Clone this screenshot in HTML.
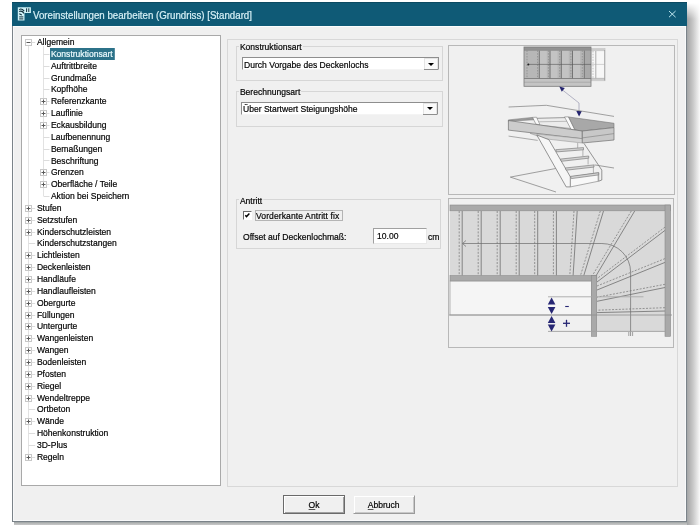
<!DOCTYPE html>
<html><head><meta charset="utf-8">
<style>
*{margin:0;padding:0;box-sizing:border-box}
html,body{width:700px;height:525px;overflow:hidden;background:#fff;font-family:"Liberation Sans",sans-serif;position:relative}
.abs{position:absolute}
#shadowR{left:687px;top:3px;width:13px;height:522px;-webkit-mask-image:linear-gradient(to bottom,transparent 0,#000 16px);background:linear-gradient(to right,#a2a5a7 0,#b0b0b0 2px,#c8c8c8 6px,#e4e4e4 10px,#fafafa 13px)}
#shadowB{left:14px;top:522px;width:673px;height:3px;background:linear-gradient(to bottom,#9ca2a2 0,#b8baba 1.5px,#c8c8c8 3px)}
#win{left:12px;top:2px;width:675px;height:520px;background:#f0f0f0;border:1px solid #7b8389;border-top:none;box-shadow:inset 1px 0 0 #f8f9fa,inset -1px -1px 0 #f8f9fa}
#title{left:12px;top:2px;width:675px;height:24px;background:#0f5a76;border-top:1px solid #0b4a62}
#ttext{left:33px;top:8.5px;font-size:10.5px;transform:scaleX(0.924);transform-origin:0 50%;color:#d8f1f7;white-space:nowrap;line-height:12px;-webkit-text-stroke:0.2px #d8f1f7}
#tree{left:21px;top:35px;width:200px;height:451px;background:#fff;border:1px solid #a9a9a9}
.row{position:absolute;font-size:9.5px;letter-spacing:0;transform:scaleX(0.9);transform-origin:0 50%;color:#000;white-space:nowrap;line-height:12px;padding:0 1.5px 0 1px;-webkit-text-stroke:0.2px #000}
.sel{background:#2c7289;color:#eefcff;-webkit-text-stroke:0.2px #eefcff;padding-right:2.4px}
#outer{left:227px;top:39px;width:451px;height:448px;border:1px solid #d8d8d8}
.grp{position:absolute;border:1px solid #d6d6d6}
.glabel{position:absolute;font-size:9.5px;letter-spacing:0;transform:scaleX(0.9);transform-origin:0 50%;color:#000;background:#f0f0f0;padding:0 1px;white-space:nowrap;line-height:12px;-webkit-text-stroke:0.2px #000}
.combo{position:absolute;background:#fff;border:1px solid #8e8e8e;border-bottom-color:#f4f4f4;height:12px}
.ctext{position:absolute;left:2px;top:0px;font-size:9.5px;letter-spacing:0;transform:scaleX(0.9);transform-origin:0 50%;line-height:11px;color:#000;white-space:nowrap;-webkit-text-stroke:0.2px #000}
.btn{position:absolute;top:494.5px;padding-top:0px;width:62px;height:19px;background:#f0f0f0;border:1px solid #f0f0f0;border-right-color:#9a9a9a;border-bottom-color:#9a9a9a;box-shadow:inset 1px 1px 0 #fff, inset -1px -1px 0 #c8c8c8;font-size:9.5px;color:#000;text-align:center;line-height:17px;-webkit-text-stroke:0.2px #000}
.dd{position:absolute;right:0;top:0;width:14px;height:12px;background:#fafafa;box-shadow:inset 1px 1px 0 #e4e4e4,inset -1px 0 0 #e4e4e4;border-bottom:1px solid #8e8e8e}
.dd:after{content:"";position:absolute;left:3.5px;top:4.5px;border-left:3px solid transparent;border-right:3px solid transparent;border-top:3.6px solid #000}
.chk{position:absolute;width:8.5px;height:8.5px;border:1px solid #6a6a6a;border-right-color:#fff;border-bottom-color:#fff;background:#fff}
.focus{position:absolute;border:1px solid #b4b4b4}
.txt{position:absolute;font-size:9.5px;letter-spacing:0;transform:scaleX(0.9);transform-origin:0 50%;color:#000;white-space:nowrap;line-height:12px;-webkit-text-stroke:0.2px #000}
.edit{position:absolute;background:#fff;border:1px solid #a0a0a0;border-bottom-color:#e8e8e8;border-right-color:#e8e8e8}
.def{border:1px solid #6a6a6a;box-shadow:inset 1px 1px 0 #fff, inset -1px -1px 0 #a0a0a0}
.bt{display:inline-block;transform:scaleX(0.9)}
u{text-decoration:underline;text-underline-offset:1px;text-decoration-thickness:0.6px;text-decoration-color:#555}
.panel{position:absolute;background:#f0f0f0;border:1px solid #b8b8b8}
#wrap{position:absolute;left:0;top:0;width:700px;height:525px;will-change:transform}
</style></head><body><div id="wrap">
<div class="abs" id="shadowR"></div>
<div class="abs" id="shadowB"></div>
<div class="abs" id="win"></div>
<div class="abs" id="title"></div>
<div class="abs" style="left:13px;top:26px;width:673px;height:1px;background:#fbfdfd"></div>
<div class="abs" id="ttext">Voreinstellungen bearbeiten (Grundriss) [Standard]</div>
<svg class="abs" style="left:0;top:0" width="700" height="30">
<polygon points="17.8,7.2 30.9,7.2 30.9,12.9 24.5,12.9 24.5,20.4 17.8,20.4" fill="#d0f2f8"/>
<path d="M19.2 9.6 Q21.5 7.8 24.2 11.2 M19.2 11.6 Q21.8 10.2 24 13.4 M19.3 13.8 L21.8 15" stroke="#14303c" stroke-width="1.1" fill="none"/>
<path d="M26.6 8.3 V12 M28.8 8.3 V12" stroke="#14303c" stroke-width="1"/>
<path d="M19.2 16.9 H23.3 M19.2 18.9 H23.3" stroke="#14303c" stroke-width="1"/>
<path d="M669 11 L675.6 17.2 M675.6 11 L669 17.2" stroke="#bfe7f0" stroke-width="1"/>
</svg>

<div class="abs" id="tree"></div>
<svg class="abs" style="left:0;top:0" width="230" height="490">
<line x1="43.5" y1="46.0" x2="43.5" y2="196.0" stroke="#e2e2e2" stroke-width="1"/>
<line x1="28.5" y1="46.0" x2="28.5" y2="456.8" stroke="#e2e2e2" stroke-width="1"/>
<rect x="25.5" y="39.5" width="6" height="6" fill="#fff" stroke="#c8c8c8" stroke-width="1"/>
<line x1="26.5" y1="42.5" x2="30.5" y2="42.5" stroke="#5a5a5a" stroke-width="1"/>
<line x1="31.5" y1="42.5" x2="35.2" y2="42.5" stroke="#dcdcdc" stroke-width="1"/>
<line x1="43.5" y1="54.5" x2="49.5" y2="54.5" stroke="#dcdcdc" stroke-width="1"/>
<line x1="43.5" y1="66.5" x2="49.5" y2="66.5" stroke="#dcdcdc" stroke-width="1"/>
<line x1="43.5" y1="78.5" x2="49.5" y2="78.5" stroke="#dcdcdc" stroke-width="1"/>
<line x1="43.5" y1="89.5" x2="49.5" y2="89.5" stroke="#dcdcdc" stroke-width="1"/>
<rect x="40.5" y="98.5" width="6" height="6" fill="#fff" stroke="#c8c8c8" stroke-width="1"/>
<line x1="41.5" y1="101.5" x2="45.5" y2="101.5" stroke="#5a5a5a" stroke-width="1"/>
<line x1="43.5" y1="99.5" x2="43.5" y2="103.5" stroke="#5a5a5a" stroke-width="1"/>
<line x1="46.5" y1="101.5" x2="49.5" y2="101.5" stroke="#dcdcdc" stroke-width="1"/>
<rect x="40.5" y="110.5" width="6" height="6" fill="#fff" stroke="#c8c8c8" stroke-width="1"/>
<line x1="41.5" y1="113.5" x2="45.5" y2="113.5" stroke="#5a5a5a" stroke-width="1"/>
<line x1="43.5" y1="111.5" x2="43.5" y2="115.5" stroke="#5a5a5a" stroke-width="1"/>
<line x1="46.5" y1="113.5" x2="49.5" y2="113.5" stroke="#dcdcdc" stroke-width="1"/>
<rect x="40.5" y="122.5" width="6" height="6" fill="#fff" stroke="#c8c8c8" stroke-width="1"/>
<line x1="41.5" y1="125.5" x2="45.5" y2="125.5" stroke="#5a5a5a" stroke-width="1"/>
<line x1="43.5" y1="123.5" x2="43.5" y2="127.5" stroke="#5a5a5a" stroke-width="1"/>
<line x1="46.5" y1="125.5" x2="49.5" y2="125.5" stroke="#dcdcdc" stroke-width="1"/>
<line x1="43.5" y1="137.5" x2="49.5" y2="137.5" stroke="#dcdcdc" stroke-width="1"/>
<line x1="43.5" y1="149.5" x2="49.5" y2="149.5" stroke="#dcdcdc" stroke-width="1"/>
<line x1="43.5" y1="160.5" x2="49.5" y2="160.5" stroke="#dcdcdc" stroke-width="1"/>
<rect x="40.5" y="169.5" width="6" height="6" fill="#fff" stroke="#c8c8c8" stroke-width="1"/>
<line x1="41.5" y1="172.5" x2="45.5" y2="172.5" stroke="#5a5a5a" stroke-width="1"/>
<line x1="43.5" y1="170.5" x2="43.5" y2="174.5" stroke="#5a5a5a" stroke-width="1"/>
<line x1="46.5" y1="172.5" x2="49.5" y2="172.5" stroke="#dcdcdc" stroke-width="1"/>
<rect x="40.5" y="181.5" width="6" height="6" fill="#fff" stroke="#c8c8c8" stroke-width="1"/>
<line x1="41.5" y1="184.5" x2="45.5" y2="184.5" stroke="#5a5a5a" stroke-width="1"/>
<line x1="43.5" y1="182.5" x2="43.5" y2="186.5" stroke="#5a5a5a" stroke-width="1"/>
<line x1="46.5" y1="184.5" x2="49.5" y2="184.5" stroke="#dcdcdc" stroke-width="1"/>
<line x1="43.5" y1="196.5" x2="49.5" y2="196.5" stroke="#dcdcdc" stroke-width="1"/>
<rect x="25.5" y="205.5" width="6" height="6" fill="#fff" stroke="#c8c8c8" stroke-width="1"/>
<line x1="26.5" y1="208.5" x2="30.5" y2="208.5" stroke="#5a5a5a" stroke-width="1"/>
<line x1="28.5" y1="206.5" x2="28.5" y2="210.5" stroke="#5a5a5a" stroke-width="1"/>
<line x1="31.5" y1="208.5" x2="35.2" y2="208.5" stroke="#dcdcdc" stroke-width="1"/>
<rect x="25.5" y="217.5" width="6" height="6" fill="#fff" stroke="#c8c8c8" stroke-width="1"/>
<line x1="26.5" y1="220.5" x2="30.5" y2="220.5" stroke="#5a5a5a" stroke-width="1"/>
<line x1="28.5" y1="218.5" x2="28.5" y2="222.5" stroke="#5a5a5a" stroke-width="1"/>
<line x1="31.5" y1="220.5" x2="35.2" y2="220.5" stroke="#dcdcdc" stroke-width="1"/>
<rect x="25.5" y="229.5" width="6" height="6" fill="#fff" stroke="#c8c8c8" stroke-width="1"/>
<line x1="26.5" y1="232.5" x2="30.5" y2="232.5" stroke="#5a5a5a" stroke-width="1"/>
<line x1="28.5" y1="230.5" x2="28.5" y2="234.5" stroke="#5a5a5a" stroke-width="1"/>
<line x1="31.5" y1="232.5" x2="35.2" y2="232.5" stroke="#dcdcdc" stroke-width="1"/>
<line x1="28.5" y1="243.5" x2="35.2" y2="243.5" stroke="#dcdcdc" stroke-width="1"/>
<rect x="25.5" y="252.5" width="6" height="6" fill="#fff" stroke="#c8c8c8" stroke-width="1"/>
<line x1="26.5" y1="255.5" x2="30.5" y2="255.5" stroke="#5a5a5a" stroke-width="1"/>
<line x1="28.5" y1="253.5" x2="28.5" y2="257.5" stroke="#5a5a5a" stroke-width="1"/>
<line x1="31.5" y1="255.5" x2="35.2" y2="255.5" stroke="#dcdcdc" stroke-width="1"/>
<rect x="25.5" y="264.5" width="6" height="6" fill="#fff" stroke="#c8c8c8" stroke-width="1"/>
<line x1="26.5" y1="267.5" x2="30.5" y2="267.5" stroke="#5a5a5a" stroke-width="1"/>
<line x1="28.5" y1="265.5" x2="28.5" y2="269.5" stroke="#5a5a5a" stroke-width="1"/>
<line x1="31.5" y1="267.5" x2="35.2" y2="267.5" stroke="#dcdcdc" stroke-width="1"/>
<rect x="25.5" y="276.5" width="6" height="6" fill="#fff" stroke="#c8c8c8" stroke-width="1"/>
<line x1="26.5" y1="279.5" x2="30.5" y2="279.5" stroke="#5a5a5a" stroke-width="1"/>
<line x1="28.5" y1="277.5" x2="28.5" y2="281.5" stroke="#5a5a5a" stroke-width="1"/>
<line x1="31.5" y1="279.5" x2="35.2" y2="279.5" stroke="#dcdcdc" stroke-width="1"/>
<rect x="25.5" y="288.5" width="6" height="6" fill="#fff" stroke="#c8c8c8" stroke-width="1"/>
<line x1="26.5" y1="291.5" x2="30.5" y2="291.5" stroke="#5a5a5a" stroke-width="1"/>
<line x1="28.5" y1="289.5" x2="28.5" y2="293.5" stroke="#5a5a5a" stroke-width="1"/>
<line x1="31.5" y1="291.5" x2="35.2" y2="291.5" stroke="#dcdcdc" stroke-width="1"/>
<rect x="25.5" y="300.5" width="6" height="6" fill="#fff" stroke="#c8c8c8" stroke-width="1"/>
<line x1="26.5" y1="303.5" x2="30.5" y2="303.5" stroke="#5a5a5a" stroke-width="1"/>
<line x1="28.5" y1="301.5" x2="28.5" y2="305.5" stroke="#5a5a5a" stroke-width="1"/>
<line x1="31.5" y1="303.5" x2="35.2" y2="303.5" stroke="#dcdcdc" stroke-width="1"/>
<rect x="25.5" y="312.5" width="6" height="6" fill="#fff" stroke="#c8c8c8" stroke-width="1"/>
<line x1="26.5" y1="315.5" x2="30.5" y2="315.5" stroke="#5a5a5a" stroke-width="1"/>
<line x1="28.5" y1="313.5" x2="28.5" y2="317.5" stroke="#5a5a5a" stroke-width="1"/>
<line x1="31.5" y1="315.5" x2="35.2" y2="315.5" stroke="#dcdcdc" stroke-width="1"/>
<rect x="25.5" y="323.5" width="6" height="6" fill="#fff" stroke="#c8c8c8" stroke-width="1"/>
<line x1="26.5" y1="326.5" x2="30.5" y2="326.5" stroke="#5a5a5a" stroke-width="1"/>
<line x1="28.5" y1="324.5" x2="28.5" y2="328.5" stroke="#5a5a5a" stroke-width="1"/>
<line x1="31.5" y1="326.5" x2="35.2" y2="326.5" stroke="#dcdcdc" stroke-width="1"/>
<rect x="25.5" y="335.5" width="6" height="6" fill="#fff" stroke="#c8c8c8" stroke-width="1"/>
<line x1="26.5" y1="338.5" x2="30.5" y2="338.5" stroke="#5a5a5a" stroke-width="1"/>
<line x1="28.5" y1="336.5" x2="28.5" y2="340.5" stroke="#5a5a5a" stroke-width="1"/>
<line x1="31.5" y1="338.5" x2="35.2" y2="338.5" stroke="#dcdcdc" stroke-width="1"/>
<rect x="25.5" y="347.5" width="6" height="6" fill="#fff" stroke="#c8c8c8" stroke-width="1"/>
<line x1="26.5" y1="350.5" x2="30.5" y2="350.5" stroke="#5a5a5a" stroke-width="1"/>
<line x1="28.5" y1="348.5" x2="28.5" y2="352.5" stroke="#5a5a5a" stroke-width="1"/>
<line x1="31.5" y1="350.5" x2="35.2" y2="350.5" stroke="#dcdcdc" stroke-width="1"/>
<rect x="25.5" y="359.5" width="6" height="6" fill="#fff" stroke="#c8c8c8" stroke-width="1"/>
<line x1="26.5" y1="362.5" x2="30.5" y2="362.5" stroke="#5a5a5a" stroke-width="1"/>
<line x1="28.5" y1="360.5" x2="28.5" y2="364.5" stroke="#5a5a5a" stroke-width="1"/>
<line x1="31.5" y1="362.5" x2="35.2" y2="362.5" stroke="#dcdcdc" stroke-width="1"/>
<rect x="25.5" y="371.5" width="6" height="6" fill="#fff" stroke="#c8c8c8" stroke-width="1"/>
<line x1="26.5" y1="374.5" x2="30.5" y2="374.5" stroke="#5a5a5a" stroke-width="1"/>
<line x1="28.5" y1="372.5" x2="28.5" y2="376.5" stroke="#5a5a5a" stroke-width="1"/>
<line x1="31.5" y1="374.5" x2="35.2" y2="374.5" stroke="#dcdcdc" stroke-width="1"/>
<rect x="25.5" y="383.5" width="6" height="6" fill="#fff" stroke="#c8c8c8" stroke-width="1"/>
<line x1="26.5" y1="386.5" x2="30.5" y2="386.5" stroke="#5a5a5a" stroke-width="1"/>
<line x1="28.5" y1="384.5" x2="28.5" y2="388.5" stroke="#5a5a5a" stroke-width="1"/>
<line x1="31.5" y1="386.5" x2="35.2" y2="386.5" stroke="#dcdcdc" stroke-width="1"/>
<rect x="25.5" y="395.5" width="6" height="6" fill="#fff" stroke="#c8c8c8" stroke-width="1"/>
<line x1="26.5" y1="398.5" x2="30.5" y2="398.5" stroke="#5a5a5a" stroke-width="1"/>
<line x1="28.5" y1="396.5" x2="28.5" y2="400.5" stroke="#5a5a5a" stroke-width="1"/>
<line x1="31.5" y1="398.5" x2="35.2" y2="398.5" stroke="#dcdcdc" stroke-width="1"/>
<line x1="28.5" y1="409.5" x2="35.2" y2="409.5" stroke="#dcdcdc" stroke-width="1"/>
<rect x="25.5" y="418.5" width="6" height="6" fill="#fff" stroke="#c8c8c8" stroke-width="1"/>
<line x1="26.5" y1="421.5" x2="30.5" y2="421.5" stroke="#5a5a5a" stroke-width="1"/>
<line x1="28.5" y1="419.5" x2="28.5" y2="423.5" stroke="#5a5a5a" stroke-width="1"/>
<line x1="31.5" y1="421.5" x2="35.2" y2="421.5" stroke="#dcdcdc" stroke-width="1"/>
<line x1="28.5" y1="433.5" x2="35.2" y2="433.5" stroke="#dcdcdc" stroke-width="1"/>
<line x1="28.5" y1="445.5" x2="35.2" y2="445.5" stroke="#dcdcdc" stroke-width="1"/>
<rect x="25.5" y="454.5" width="6" height="6" fill="#fff" stroke="#c8c8c8" stroke-width="1"/>
<line x1="26.5" y1="457.5" x2="30.5" y2="457.5" stroke="#5a5a5a" stroke-width="1"/>
<line x1="28.5" y1="455.5" x2="28.5" y2="459.5" stroke="#5a5a5a" stroke-width="1"/>
<line x1="31.5" y1="457.5" x2="35.2" y2="457.5" stroke="#dcdcdc" stroke-width="1"/>
</svg>
<div class="row" style="left:35.7px;top:36.00px">Allgemein</div>
<div class="row sel" style="left:50.0px;top:47.85px">Konstruktionsart</div>
<div class="row" style="left:50.0px;top:59.70px">Auftrittbreite</div>
<div class="row" style="left:50.0px;top:71.55px">Grundmaße</div>
<div class="row" style="left:50.0px;top:83.40px">Kopfhöhe</div>
<div class="row" style="left:50.0px;top:95.25px">Referenzkante</div>
<div class="row" style="left:50.0px;top:107.10px">Lauflinie</div>
<div class="row" style="left:50.0px;top:118.95px">Eckausbildung</div>
<div class="row" style="left:50.0px;top:130.80px">Laufbenennung</div>
<div class="row" style="left:50.0px;top:142.65px">Bemaßungen</div>
<div class="row" style="left:50.0px;top:154.50px">Beschriftung</div>
<div class="row" style="left:50.0px;top:166.35px">Grenzen</div>
<div class="row" style="left:50.0px;top:178.20px">Oberfläche / Teile</div>
<div class="row" style="left:50.0px;top:190.05px">Aktion bei Speichern</div>
<div class="row" style="left:35.7px;top:201.90px">Stufen</div>
<div class="row" style="left:35.7px;top:213.75px">Setzstufen</div>
<div class="row" style="left:35.7px;top:225.60px">Kinderschutzleisten</div>
<div class="row" style="left:35.7px;top:237.45px">Kinderschutzstangen</div>
<div class="row" style="left:35.7px;top:249.30px">Lichtleisten</div>
<div class="row" style="left:35.7px;top:261.15px">Deckenleisten</div>
<div class="row" style="left:35.7px;top:273.00px">Handläufe</div>
<div class="row" style="left:35.7px;top:284.85px">Handlaufleisten</div>
<div class="row" style="left:35.7px;top:296.70px">Obergurte</div>
<div class="row" style="left:35.7px;top:308.55px">Füllungen</div>
<div class="row" style="left:35.7px;top:320.40px">Untergurte</div>
<div class="row" style="left:35.7px;top:332.25px">Wangenleisten</div>
<div class="row" style="left:35.7px;top:344.10px">Wangen</div>
<div class="row" style="left:35.7px;top:355.95px">Bodenleisten</div>
<div class="row" style="left:35.7px;top:367.80px">Pfosten</div>
<div class="row" style="left:35.7px;top:379.65px">Riegel</div>
<div class="row" style="left:35.7px;top:391.50px">Wendeltreppe</div>
<div class="row" style="left:35.7px;top:403.35px">Ortbeton</div>
<div class="row" style="left:35.7px;top:415.20px">Wände</div>
<div class="row" style="left:35.7px;top:427.05px">Höhenkonstruktion</div>
<div class="row" style="left:35.7px;top:438.90px">3D-Plus</div>
<div class="row" style="left:35.7px;top:450.75px">Regeln</div>

<div class="abs" id="outer"></div>

<div class="grp" style="left:236px;top:46px;width:207px;height:35px"></div>
<div class="glabel" style="left:238.5px;top:41px">Konstruktionsart</div>
<div class="combo" style="left:242px;top:57px;width:197px;height:13px"><div class="ctext" style="left:1px;top:0.5px">Durch Vorgabe des Deckenlochs</div><div class="dd"></div></div>

<div class="grp" style="left:236px;top:91px;width:207px;height:36px"></div>
<div class="glabel" style="left:238.5px;top:86px">Berechnungsart</div>
<div class="combo" style="left:241px;top:101.5px;width:197px;height:13px"><div class="ctext" style="left:0.5px;top:0.5px">Über Startwert Steigungshöhe</div><div class="dd"></div></div>

<div class="grp" style="left:236px;top:199px;width:205px;height:50px"></div>
<div class="glabel" style="left:238.5px;top:194.5px">Antritt</div>
<div class="chk" style="left:243px;top:211px"></div>
<svg class="abs" style="left:243px;top:211px" width="9" height="9"><path d="M2.3 4.3 L3.5 5.6 L6.4 2.5" fill="none" stroke="#000" stroke-width="1.4"/></svg>
<div class="focus" style="left:255px;top:210px;width:88px;height:11px"></div>
<div class="txt" style="left:256px;top:209.5px;letter-spacing:0.1px">Vorderkante Antritt fix</div>
<div class="txt" style="left:243px;top:230.5px">Offset auf Deckenlochmaß:</div>
<div class="edit" style="left:373px;top:228px;width:54px;height:16px"></div>
<div class="txt" style="left:376.5px;top:230px">10.00</div>
<div class="txt" style="left:427.5px;top:230.5px">cm</div>

<div class="btn def" style="left:283px"><span class="bt"><u>O</u>k</span></div>
<div class="btn" style="left:353px"><span class="bt"><u>A</u>bbruch</span></div>

<div class="panel" style="left:448px;top:45px;width:227px;height:150px"></div>
<div class="panel" style="left:448px;top:198px;width:226px;height:150px"></div>
<svg class="abs" style="left:0;top:0" width="700" height="525">
<rect x="524" y="47" width="67" height="39" fill="#b7b7b7"/>
<rect x="539.8" y="50.4" width="7" height="28" fill="#c3c3c3"/>
<rect x="550.5" y="50.4" width="7" height="28" fill="#c3c3c3"/>
<rect x="561.8" y="50.4" width="7" height="28" fill="#c3c3c3"/>
<rect x="573.0" y="50.4" width="7" height="28" fill="#c3c3c3"/>
<rect x="524" y="47" width="67" height="3.4" fill="#929292"/>
<rect x="524" y="78.5" width="67" height="7.8" fill="#c4c4c4"/>
<rect x="584.8" y="50.4" width="6" height="28" fill="#a9a9a9"/>
<rect x="591" y="48.5" width="14" height="32.3" fill="#f7f7f7" stroke="#b0b0b0" stroke-width="0.5"/>
<rect x="591" y="48.5" width="14" height="2.6" fill="#cccccc"/>
<rect x="591" y="78.2" width="14" height="2.6" fill="#cccccc"/>
<line x1="539.3" y1="50.4" x2="539.3" y2="78.5" stroke="#6c6c6c" stroke-width="0.9"/>
<line x1="537.6" y1="50.4" x2="537.6" y2="78.5" stroke="#858585" stroke-width="0.7" stroke-dasharray="1.5,1.3"/>
<line x1="550" y1="50.4" x2="550" y2="78.5" stroke="#6c6c6c" stroke-width="0.9"/>
<line x1="548.4" y1="50.4" x2="548.4" y2="78.5" stroke="#858585" stroke-width="0.7" stroke-dasharray="1.5,1.3"/>
<line x1="561.3" y1="50.4" x2="561.3" y2="78.5" stroke="#6c6c6c" stroke-width="0.9"/>
<line x1="559.7" y1="50.4" x2="559.7" y2="78.5" stroke="#858585" stroke-width="0.7" stroke-dasharray="1.5,1.3"/>
<line x1="572.5" y1="50.4" x2="572.5" y2="78.5" stroke="#6c6c6c" stroke-width="0.9"/>
<line x1="570.9" y1="50.4" x2="570.9" y2="78.5" stroke="#858585" stroke-width="0.7" stroke-dasharray="1.5,1.3"/>
<line x1="584.3" y1="50.4" x2="584.3" y2="78.5" stroke="#6c6c6c" stroke-width="0.9"/>
<line x1="582.3" y1="50.4" x2="582.3" y2="78.5" stroke="#858585" stroke-width="0.7" stroke-dasharray="1.5,1.3"/>
<line x1="595.8" y1="51" x2="595.8" y2="78.3" stroke="#8c8c8c" stroke-width="0.7"/>
<line x1="593" y1="51" x2="593" y2="78.3" stroke="#a0a0a0" stroke-width="0.6" stroke-dasharray="1.5,1.3"/>
<line x1="527" y1="50.4" x2="527" y2="78.5" stroke="#858585" stroke-width="0.7" stroke-dasharray="1.5,1.3"/>
<line x1="604.6" y1="50" x2="604.6" y2="80.5" stroke="#8a8a8a" stroke-width="0.6"/>
<line x1="524" y1="78.5" x2="591" y2="78.5" stroke="#737373" stroke-width="0.8"/>
<line x1="591" y1="78.3" x2="605" y2="78.3" stroke="#a0a0a0" stroke-width="0.5"/>
<line x1="524" y1="50.4" x2="591" y2="50.4" stroke="#8a8a8a" stroke-width="0.6"/>
<line x1="524" y1="82.2" x2="591" y2="82.2" stroke="#9a9a9a" stroke-width="0.6"/>
<rect x="524" y="47" width="67" height="39.3" fill="none" stroke="#7a7a7a" stroke-width="0.8"/>
<line x1="528" y1="64.4" x2="591" y2="64.4" stroke="#555" stroke-width="0.6"/>
<line x1="591" y1="64.4" x2="605" y2="64.4" stroke="#aaa" stroke-width="0.5"/>
<circle cx="528.3" cy="64.4" r="1" fill="#222"/>
<line x1="562.5" y1="90" x2="579" y2="103" stroke="#8a8aa6" stroke-width="0.6"/>
<line x1="579" y1="103" x2="579" y2="111.5" stroke="#a0a0b4" stroke-width="0.8"/>
<polygon points="559.3,86.4 564.8,88 561.8,91.8" fill="#23236e"/>
<polygon points="576.3,111 581.9,111 579.1,116.5" fill="#23236e"/>
<polyline points="508.6,107 546.3,105.3 614,116.4" fill="none" stroke="#8a8a8a" stroke-width="0.8"/>
<polygon points="532.3,117.4 568.6,117 575,129.9 532.3,123.8" fill="#ececec"/>
<polygon points="532.5,117.4 536.5,117.2 540,124.8 536,124.2" fill="#fafafa" stroke="#7a7a7a" stroke-width="0.6"/>
<polygon points="564.5,116.9 568.5,116.8 575,129.9 571,129.3" fill="#fafafa" stroke="#7a7a7a" stroke-width="0.6"/>
<line x1="537" y1="118.3" x2="565" y2="117.6" stroke="#777" stroke-width="0.7"/>
<line x1="539" y1="121.8" x2="567" y2="121.3" stroke="#9a9a9a" stroke-width="0.6"/>
<line x1="541" y1="125.3" x2="571" y2="128.5" stroke="#888" stroke-width="0.6"/>
<polygon points="508.4,119.9 532.3,117.4 533.5,119.8 508.4,121.3" fill="#9a9a9a" stroke="#6e6e6e" stroke-width="0.5"/>
<polygon points="568.6,117 614,123.3 614,127.6 582.3,131 575,129.9" fill="#a8a8a8" stroke="#757575" stroke-width="0.6"/>
<polygon points="508.4,120.5 582.3,131 582.3,138.7 508.4,130.1" fill="#cccccc" stroke="#6e6e6e" stroke-width="0.7"/>
<polygon points="530,133.3 582.3,138.7 582.3,143 545,138.8" fill="#d4d4d4" stroke="#8a8a8a" stroke-width="0.5"/>
<polygon points="582.3,131 614,127.6 614,140 582.3,143" fill="#c8c8c8" stroke="#707070" stroke-width="0.7"/>
<line x1="582.3" y1="137.9" x2="614" y2="133.6" stroke="#7e7e7e" stroke-width="0.6"/>
<line x1="508.6" y1="136.1" x2="537.7" y2="140.4" stroke="#8a8a8a" stroke-width="0.7"/>
<polygon points="536.8,135 548.9,139.7 570.4,176.9 570.4,186.9 566.2,186.9" fill="#f6f6f6" stroke="#6a6a6a" stroke-width="0.7"/>
<polygon points="570.4,176.9 598.7,172.7 598.7,181.2 570.4,186.9" fill="#f8f8f8" stroke="#777" stroke-width="0.6"/>
<polyline points="584,143.4 601.8,170.1 601.8,180 598.7,181.2" fill="none" stroke="#6a6a6a" stroke-width="0.7"/>
<polygon points="555.7,149.7 583.5,147.6 583.5,149.8 556.7,151.9" fill="#d2d2d2" stroke="#6e6e6e" stroke-width="0.6"/>
<line x1="582.9" y1="149.6" x2="582.9" y2="156.1" stroke="#888" stroke-width="0.6"/>
<polygon points="560.4,159.1 588.7,156.0 588.7,158.2 561.4,161.3" fill="#d2d2d2" stroke="#6e6e6e" stroke-width="0.6"/>
<line x1="588.1" y1="158.0" x2="588.1" y2="164.5" stroke="#888" stroke-width="0.6"/>
<polygon points="565.2,168.0 594.0,164.9 594.0,167.1 566.2,170.2" fill="#d2d2d2" stroke="#6e6e6e" stroke-width="0.6"/>
<line x1="593.4" y1="166.9" x2="593.4" y2="173.4" stroke="#888" stroke-width="0.6"/>
<polygon points="570.4,176.4 598.7,172.7 598.7,174.9 571.4,178.6" fill="#d2d2d2" stroke="#6e6e6e" stroke-width="0.6"/>
<line x1="598.1" y1="174.7" x2="598.1" y2="181.2" stroke="#888" stroke-width="0.6"/>
<line x1="577.7" y1="143" x2="577.7" y2="148" stroke="#888" stroke-width="0.6"/>
<line x1="510.3" y1="177.1" x2="555.7" y2="168.5" stroke="#7a7a7a" stroke-width="0.7"/>
<line x1="510.3" y1="177.1" x2="556" y2="192" stroke="#7a7a7a" stroke-width="0.7"/>
<line x1="594.5" y1="164.9" x2="614" y2="168" stroke="#7a7a7a" stroke-width="0.7"/>
<rect x="450" y="205" width="220" height="70.5" fill="#d9d9d9"/>
<rect x="591" y="205" width="79" height="126.5" fill="#d9d9d9"/>
<rect x="450" y="281" width="141.5" height="34" fill="#f5f5f5" stroke="#9a9a9a" stroke-width="0.7"/>
<line x1="462.2" y1="211" x2="462.2" y2="275.5" stroke="#6e6e6e" stroke-width="0.8"/>
<line x1="459.2" y1="211" x2="459.2" y2="275.5" stroke="#7a7a7a" stroke-width="0.75" stroke-dasharray="2,1.4"/>
<line x1="481.2" y1="211" x2="481.2" y2="275.5" stroke="#6e6e6e" stroke-width="0.8"/>
<line x1="478.2" y1="211" x2="478.2" y2="275.5" stroke="#7a7a7a" stroke-width="0.75" stroke-dasharray="2,1.4"/>
<line x1="500.2" y1="211" x2="500.2" y2="275.5" stroke="#6e6e6e" stroke-width="0.8"/>
<line x1="497.2" y1="211" x2="497.2" y2="275.5" stroke="#7a7a7a" stroke-width="0.75" stroke-dasharray="2,1.4"/>
<line x1="519.2" y1="211" x2="519.2" y2="275.5" stroke="#6e6e6e" stroke-width="0.8"/>
<line x1="516.2" y1="211" x2="516.2" y2="275.5" stroke="#7a7a7a" stroke-width="0.75" stroke-dasharray="2,1.4"/>
<line x1="537.7" y1="211" x2="537.7" y2="275.5" stroke="#6e6e6e" stroke-width="0.8"/>
<line x1="534.7" y1="211" x2="534.7" y2="275.5" stroke="#7a7a7a" stroke-width="0.75" stroke-dasharray="2,1.4"/>
<line x1="556.4" y1="211" x2="556.4" y2="275.5" stroke="#6e6e6e" stroke-width="0.8"/>
<line x1="553.4" y1="211" x2="553.4" y2="275.5" stroke="#7a7a7a" stroke-width="0.75" stroke-dasharray="2,1.4"/>
<line x1="577.2" y1="211" x2="573.1" y2="275.5" stroke="#6e6e6e" stroke-width="0.8"/>
<line x1="603.5" y1="211" x2="583.8" y2="275.5" stroke="#6e6e6e" stroke-width="0.8"/>
<line x1="634.7" y1="211" x2="595.3" y2="277" stroke="#6e6e6e" stroke-width="0.8"/>
<line x1="665" y1="230.4" x2="597" y2="282" stroke="#6e6e6e" stroke-width="0.8"/>
<line x1="665" y1="262.4" x2="597" y2="290" stroke="#6e6e6e" stroke-width="0.8"/>
<line x1="665" y1="287.5" x2="597" y2="301.3" stroke="#6e6e6e" stroke-width="0.8"/>
<line x1="665" y1="311" x2="597" y2="312.6" stroke="#6e6e6e" stroke-width="0.8"/>
<line x1="574" y1="211" x2="569.8" y2="275.5" stroke="#7a7a7a" stroke-width="0.75" stroke-dasharray="2,1.4"/>
<line x1="600.3" y1="211" x2="580.5" y2="275.5" stroke="#7a7a7a" stroke-width="0.75" stroke-dasharray="2,1.4"/>
<line x1="631.3" y1="211" x2="593" y2="274.5" stroke="#7a7a7a" stroke-width="0.75" stroke-dasharray="2,1.4"/>
<line x1="665" y1="227.1" x2="597" y2="278.6" stroke="#7a7a7a" stroke-width="0.75" stroke-dasharray="2,1.4"/>
<line x1="665" y1="258.6" x2="597" y2="286" stroke="#7a7a7a" stroke-width="0.75" stroke-dasharray="2,1.4"/>
<line x1="665" y1="284.3" x2="597" y2="297.2" stroke="#7a7a7a" stroke-width="0.75" stroke-dasharray="2,1.4"/>
<line x1="665" y1="307.7" x2="597" y2="310.2" stroke="#7a7a7a" stroke-width="0.75" stroke-dasharray="2,1.4"/>
<path d="M463 243.5 L601.9 243.5 A28.7 28.7 0 0 1 630.6 272.2 L630.6 336" fill="none" stroke="#6a6a6a" stroke-width="0.7"/>
<polyline points="466,240.5 462.5,243.5 466,246.5" fill="none" stroke="#6a6a6a" stroke-width="0.7"/>
<line x1="628.8" y1="332" x2="628.8" y2="336" stroke="#6a6a6a" stroke-width="0.6"/>
<line x1="632.6" y1="332" x2="632.6" y2="336" stroke="#6a6a6a" stroke-width="0.6"/>
<rect x="450" y="205" width="220.5" height="5.8" fill="#a9a9a9" stroke="#8a8a8a" stroke-width="0.6"/>
<rect x="665" y="205" width="5.6" height="131.3" fill="#a9a9a9" stroke="#8a8a8a" stroke-width="0.6"/>
<rect x="450" y="275.6" width="146.8" height="5.3" fill="#a9a9a9" stroke="#8a8a8a" stroke-width="0.6"/>
<rect x="591.4" y="275.6" width="5.3" height="60.7" fill="#a9a9a9" stroke="#8a8a8a" stroke-width="0.6"/>
<line x1="548" y1="296.8" x2="643.5" y2="296.8" stroke="#a8a8a8" stroke-width="0.9"/>
<line x1="449" y1="315" x2="672" y2="315" stroke="#8e8e8e" stroke-width="0.8"/>
<line x1="548" y1="331.4" x2="665" y2="331.4" stroke="#a0a0a0" stroke-width="0.9"/>
<polygon points="551.6,297.4 555.4,304.4 547.8,304.4" fill="#272774"/>
<polygon points="547.8,306.9 555.4,306.9 551.6,313.9" fill="#272774"/>
<polygon points="551.6,316.1 555.4,323 547.8,323" fill="#272774"/>
<polygon points="547.8,324.4 555.4,324.4 551.6,331.5" fill="#272774"/>
<line x1="565.2" y1="306.5" x2="568.8" y2="306.5" stroke="#272774" stroke-width="1.1"/>
<line x1="563" y1="323.3" x2="570" y2="323.3" stroke="#272774" stroke-width="1.3"/>
<line x1="566.5" y1="319.8" x2="566.5" y2="326.8" stroke="#272774" stroke-width="1.3"/>
</svg>
</div></body></html>
